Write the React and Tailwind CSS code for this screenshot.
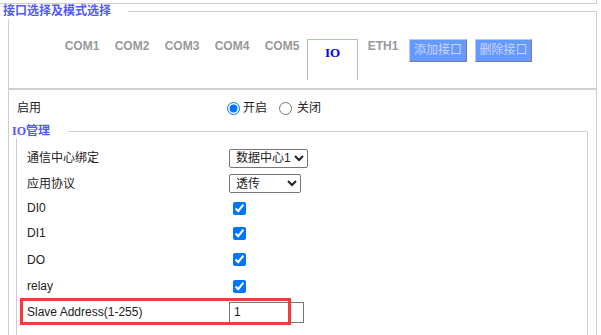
import { useState } from 'react';

const TABS = ['COM1', 'COM2', 'COM3', 'COM4', 'COM5'];

const IO_ROWS = [
  { key: 'center', label: '通信中心绑定', type: 'select', options: ['数据中心1', '数据中心2'], w: 'w-[79px]', h: 'h-[26px]' },
  { key: 'proto', label: '应用协议', type: 'select', options: ['透传', 'Modbus'], w: 'w-[72px]', h: 'h-[25px]' },
  { key: 'di0', label: 'DI0', type: 'check', h: 'h-[24px]' },
  { key: 'di1', label: 'DI1', type: 'check', h: 'h-[26px]' },
  { key: 'do', label: 'DO', type: 'check', h: 'h-[27px]' },
  { key: 'relay', label: 'relay', type: 'check', h: 'h-[26px]' },
];

export default function App() {
  const [enabled, setEnabled] = useState(true);
  const [checks, setChecks] = useState({ di0: true, di1: true, do: true, relay: true });
  const [slave, setSlave] = useState('1');

  return (
    <div className="w-[601px] h-[335px] overflow-hidden bg-white text-[12px] text-[#222] font-[family-name:Liberation_Sans,Noto_Sans_CJK_SC,sans-serif]">
      {/* previous panel edge */}
      <div className="h-[4px] w-[597px] border-b border-r border-[#cfcfcf]" />

      {/* 接口选择及模式选择 */}
      <fieldset className="ml-[8px] w-[589px] border border-[#cfcfcf]">
        <legend className="-ml-[6px] pr-[17px] text-[12px] leading-[15px] font-bold text-[#4f5af7]">
          接口选择及模式选择
        </legend>

        {/* Tabs */}
        <div className="mt-[20px] h-[51px] border-b-2 border-[#d0d0d0] flex items-start pl-[48px]">
          {TABS.map((t) => (
            <div key={t} className="w-[50px] text-center text-[12px] leading-[14px] font-bold text-[#999]">
              {t}
            </div>
          ))}
          <div className="w-[51px] h-[41px] border border-b-0 border-[#b0c6aa] text-center pt-[6px] text-[13px] leading-[14px] font-bold text-[#0000ff] font-[family-name:Liberation_Serif,serif]">
            IO
          </div>
          <div className="w-[50px] text-center text-[12px] leading-[14px] font-bold text-[#999]">ETH1</div>
          <button className="ml-[1px] w-[58px] h-[23px] bg-[#6699ff] text-[#cdd3ff] text-[12px] leading-[21px] border border-t-[#b4c8ff] border-l-[#b4c8ff] border-r-[#7c7c7c] border-b-[#7c7c7c]">
            添加接口
          </button>
          <button className="ml-[8px] w-[57px] h-[23px] bg-[#6699ff] text-[#cdd3ff] text-[12px] leading-[21px] border border-t-[#b4c8ff] border-l-[#b4c8ff] border-r-[#7c7c7c] border-b-[#7c7c7c]">
            删除接口
          </button>
        </div>

        {/* 启用 */}
        <div className="h-[34px] pt-[2px] flex items-center">
          <div className="w-[218px] pl-[8px]">启用</div>
          <label className="flex items-center">
            <input type="radio" name="en" checked={enabled} onChange={() => setEnabled(true)} />
            <span className="ml-[3px]">开启</span>
          </label>
          <label className="flex items-center ml-[12px]">
            <input type="radio" name="en" checked={!enabled} onChange={() => setEnabled(false)} />
            <span className="ml-[5px]">关闭</span>
          </label>
        </div>

        {/* IO管理 */}
        <fieldset className="ml-[7px] w-[572px] border border-[#cfcfcf] pb-[20px]">
          <legend className="-ml-[5px] pr-[18px] text-[12px] leading-[14px] font-bold text-[#4f5af7] font-[family-name:Liberation_Serif,Noto_Sans_CJK_SC,serif]">
            IO管理
          </legend>

          <div className="mt-[7px]">
            {IO_ROWS.map((r) => (
              <div key={r.key} className={`${r.h} flex items-center`}>
                <div className="w-[212px] pl-[10px]">{r.label}</div>
                {r.type === 'select' ? (
                  <select className={`${r.w} h-[19px] border border-[#767676] rounded-[2px] text-[12px] pl-[2px]`}>
                    {r.options.map((o) => (
                      <option key={o}>{o}</option>
                    ))}
                  </select>
                ) : (
                  <input
                    type="checkbox"
                    className="ml-[4px]"
                    checked={checks[r.key]}
                    onChange={() => setChecks({ ...checks, [r.key]: !checks[r.key] })}
                  />
                )}
              </div>
            ))}

            {/* Slave address, highlighted */}
            <div className="relative h-[26px] flex items-center">
              <div className="w-[212px] pl-[10px]">Slave Address(1-255)</div>
              <input
                type="text"
                value={slave}
                onChange={(e) => setSlave(e.target.value)}
                className="w-[75px] h-[21px] border border-[#767676] pl-[4px] text-[12px]"
              />
              <div className="absolute z-10 left-[3px] -top-[1px] w-[271px] h-[27px] border-[3px] border-[#f23b3b] pointer-events-none" />
            </div>
          </div>
        </fieldset>
      </fieldset>
    </div>
  );
}
